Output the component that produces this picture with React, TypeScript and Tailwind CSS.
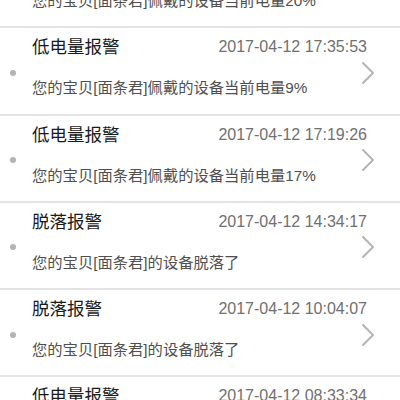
import React from "react";

type Item = { title: string; time: string; desc: string };

const items: Item[] = [
  { title: "低电量报警", time: "2017-04-12 17:52:10", desc: "您的宝贝[面条君]佩戴的设备当前电量20%" },
  { title: "低电量报警", time: "2017-04-12 17:35:53", desc: "您的宝贝[面条君]佩戴的设备当前电量9%" },
  { title: "低电量报警", time: "2017-04-12 17:19:26", desc: "您的宝贝[面条君]佩戴的设备当前电量17%" },
  { title: "脱落报警", time: "2017-04-12 14:34:17", desc: "您的宝贝[面条君]的设备脱落了" },
  { title: "脱落报警", time: "2017-04-12 10:04:07", desc: "您的宝贝[面条君]的设备脱落了" },
  { title: "低电量报警", time: "2017-04-12 08:33:34", desc: "您的宝贝[面条君]佩戴的设备当前电量15%" },
];

function Row({ item }: { item: Item }) {
  return (
    <div className="flex h-[87.25px] shrink-0 border-b-2 border-[#e3e3e3] bg-white">
      <div className="flex w-[32px] items-center pl-[10px] pt-[4px]">
        <div className="h-[6px] w-[6px] rounded-full bg-[#b3b3b3]" />
      </div>
      <div className="flex min-w-0 flex-1 flex-col pt-[7px]">
        <div className="flex h-[24px] items-center justify-between">
          <span className="text-[17.5px] leading-[24px] text-[#1a1a1a]">{item.title}</span>
          <span className="-mr-[5px] text-[16px] leading-[24px] text-[#707070]">{item.time}</span>
        </div>
        <div className="mt-[19px] h-[20px] whitespace-nowrap text-[15.3px] leading-[20px] text-[#4f4f4f]">
          {item.desc}
        </div>
      </div>
      <div className="flex w-[38px] items-center pt-[4px]">
        <svg width="12" height="22" viewBox="0 0 12 22" fill="none">
          <polyline points="1,1 11,11 1,21" stroke="#b5b5b5" strokeWidth="2" strokeLinecap="round" strokeLinejoin="round" />
        </svg>
      </div>
    </div>
  );
}

export default function App() {
  return (
    <div
      className="h-[400px] w-[400px] overflow-hidden bg-white"
      style={{ fontFamily: '"Liberation Sans", "Noto Sans CJK SC", sans-serif' }}
    >
      <div className="-mt-[59px] flex flex-col">
        {items.map((it, i) => (
          <Row key={i} item={it} />
        ))}
      </div>
    </div>
  );
}
